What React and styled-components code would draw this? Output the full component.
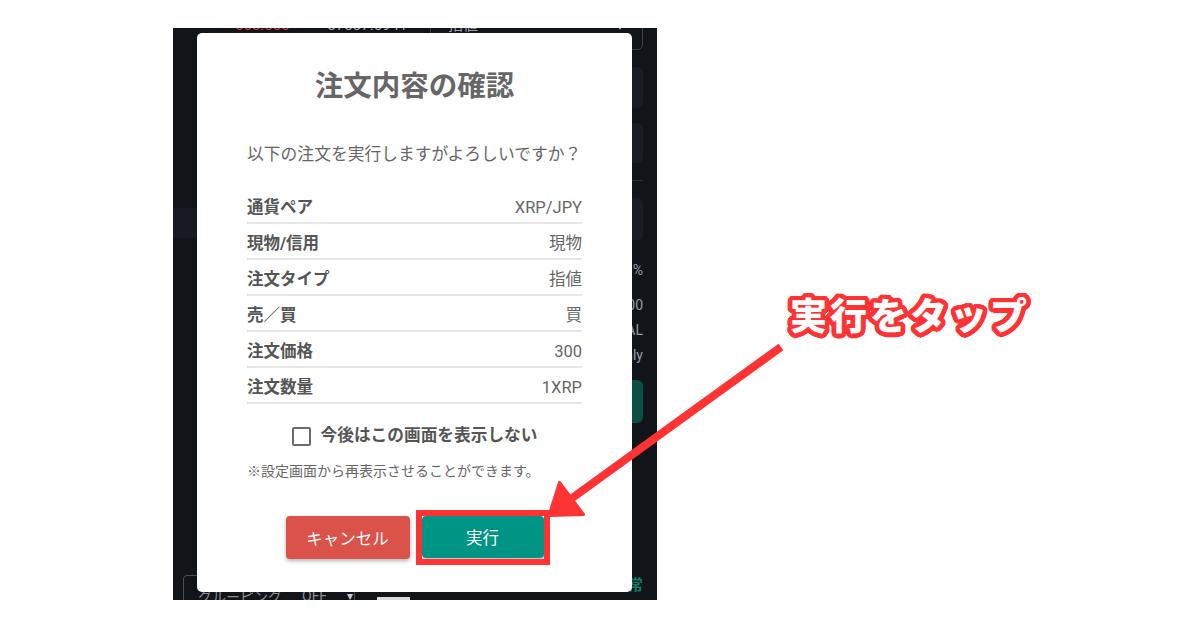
import React from "react";
import styled, { createGlobalStyle } from "styled-components";

const FONT = `Roboto, "Noto Sans CJK JP", "Noto Sans", sans-serif`;
const RED = "#ff3333";

const ring = (r, c, n = 24) =>
  Array.from({ length: n }, (_, i) => {
    const a = (i / n) * Math.PI * 2;
    return `${(Math.cos(a) * r).toFixed(2)}px ${(Math.sin(a) * r).toFixed(2)}px 0 ${c}`;
  }).join(", ");

const OUTLINE = [ring(1.5, RED, 16), ring(3, RED), ring(4.5, RED, 32)].join(", ");

const Global = createGlobalStyle`
  html, body { margin: 0; padding: 0; background: #ffffff; }
  * { box-sizing: border-box; }
`;

const Page = styled.div`
  position: relative;
  width: 1200px;
  height: 630px;
  padding: 28px 0 0 173px;
  background: #ffffff;
  font-family: ${FONT};
  overflow: hidden;
`;

/* ---------- phone screenshot ---------- */
const Phone = styled.div`
  position: relative;
  width: 484px;
  height: 572px;
  background: #111419;
  overflow: hidden;
`;

const AppContent = styled.div`
  display: grid;
  grid-template-columns: 257px 213px;
  height: 610px;
  margin-top: -22px;
`;

const LeftCol = styled.div`
  display: flex;
  flex-direction: column;
`;

const PriceRow = styled.div`
  display: flex;
  align-items: center;
  height: 38px;
  padding-left: 62px;
  gap: 38px;
  font-size: 15px;
`;

const Price = styled.span`
  color: ${(p) => p.$color};
`;

const Band = styled.div`
  margin-top: 164px;
  height: 30px;
  background: #171a21;
`;

const BottomRow = styled.div`
  margin-top: auto;
  height: 41px;
  display: flex;
  align-items: flex-start;
  padding-left: 10px;
  gap: 22px;
`;

const GroupBox = styled.div`
  display: flex;
  align-items: center;
  gap: 20px;
  height: 38px;
  width: 172px;
  padding: 4px 0 0 14px;
  border: 1px solid #4a4e57;
  border-radius: 4px;
  color: #8a8e96;
  font-size: 14px;
`;

const DepthIcon = styled.div`
  display: flex;
  flex-direction: column;
  gap: 3px;
  margin-top: 22px;
  width: 33px;
`;

const DepthBar = styled.span`
  display: block;
  height: 3px;
  width: ${(p) => p.$w}px;
  background: ${(p) => p.$c};
`;

const RightCol = styled.div`
  display: flex;
  flex-direction: column;
`;

const SelectBox = styled.div`
  display: flex;
  justify-content: space-between;
  height: 44px;
  padding: 8px 16px 0 17px;
  border: 1px solid #3c4049;
  border-radius: 5px;
  color: #a0a4ab;
  font-size: 15px;
  line-height: 20px;
`;

const Caret = styled.span`
  font-size: 12px;
  color: #c8cbd0;
`;

const DarkField = styled.div`
  margin-top: ${(p) => p.$mt}px;
  height: ${(p) => p.$h}px;
  border-radius: 6px;
  background: #1a1d24;
`;

const Rule = styled.div`
  margin-top: 17px;
  height: 1px;
  background: #2c3038;
`;

const SideText = styled.div`
  margin-top: ${(p) => p.$mt}px;
  line-height: 20px;
  text-align: right;
  color: #9a9ea6;
  font-size: 14px;
`;

const GreenButton = styled.div`
  margin-top: 15px;
  height: 43px;
  border-radius: 6px;
  background: #0b4f44;
`;

const GreenLabel = styled.div`
  margin-top: auto;
  margin-bottom: 21px;
  line-height: 20px;
  text-align: right;
  color: #0e7c68;
  font-size: 15px;
  font-weight: 700;
`;

/* ---------- modal ---------- */
const Modal = styled.div`
  position: absolute;
  left: 24px;
  top: 5px;
  width: 435px;
  background: #ffffff;
  border-radius: 5px;
  padding: 34px 50px 33px;
  display: flex;
  flex-direction: column;
`;

const Title = styled.h2`
  margin: 0;
  text-align: center;
  font-size: 28.5px;
  line-height: 40px;
  font-weight: 700;
  color: #666666;
`;

const Lead = styled.p`
  margin: 35px 0 0;
  font-size: 16.8px;
  line-height: 24px;
  color: #666666;
  white-space: nowrap;
`;

const Table = styled.div`
  margin-top: 22px;
  display: flex;
  flex-direction: column;
`;

const Row = styled.div`
  display: flex;
  justify-content: space-between;
  align-items: center;
  height: 36px;
  padding: 8px 0 2px;
  border-bottom: 2px solid #e6e6e6;
  font-size: 16.5px;
  line-height: 24px;
`;

const Label = styled.span`
  font-weight: 700;
  color: #555555;
`;

const Value = styled.span`
  color: #666666;
`;

const CheckRow = styled.label`
  margin-top: 20px;
  display: flex;
  justify-content: center;
  align-items: center;
  gap: 10px;
  line-height: 24px;
  font-size: 16.7px;
  font-weight: 700;
  color: #555555;
`;

const Box = styled.span`
  display: inline-block;
  width: 19px;
  height: 19px;
  border: 2.5px solid #6a6a6a;
  border-radius: 2px;
`;

const Note = styled.p`
  margin: 13px 0 0;
  font-size: 14px;
  line-height: 20px;
  color: #666666;
  white-space: nowrap;
`;

const Buttons = styled.div`
  margin-top: 35px;
  display: flex;
  justify-content: center;
  gap: 12px;
`;

const Button = styled.button`
  width: ${(p) => p.$w}px;
  height: ${(p) => p.$h}px;
  border: none;
  border-radius: 4px;
  background: ${(p) => p.$bg};
  color: #ffffff;
  font-family: ${FONT};
  font-size: 16.5px;
  box-shadow: 0 2px 4px rgba(0, 0, 0, 0.3);
  padding: 0;
`;

const Highlight = styled.span`
  position: relative;
  display: inline-flex;
  &::after {
    content: "";
    position: absolute;
    inset: -6px;
    border: 6px solid ${RED};
  }
`;

/* ---------- annotation ---------- */
const Callout = styled.div`
  position: absolute;
  left: 790px;
  top: 292px;
  font-family: "Noto Sans CJK JP", sans-serif;
  font-size: 37px;
  line-height: 44px;
  font-weight: 900;
  letter-spacing: 3px;
  color: #ffffff;
  text-shadow: ${OUTLINE};
  white-space: nowrap;
`;

const ArrowSvg = styled.svg`
  position: absolute;
  left: 0;
  top: 0;
  pointer-events: none;
`;

const rows = [
  ["通貨ペア", "XRP/JPY"],
  ["現物/信用", "現物"],
  ["注文タイプ", "指値"],
  ["売／買", "買"],
  ["注文価格", "300"],
  ["注文数量", "1XRP"],
];

export default function App() {
  return (
    <>
      <Global />
      <Page>
        <Phone>
          <AppContent>
            <LeftCol>
              <PriceRow>
                <Price $color="#d23c3c">000.000</Price>
                <Price $color="#a6a9b0">37337.6941</Price>
              </PriceRow>
              <Band />
              <BottomRow>
                <GroupBox>
                  <span>グルーピング</span>
                  <span>OFF</span>
                  <Caret>▾</Caret>
                </GroupBox>
                <DepthIcon>
                  <DepthBar $w={33} $c="#d9dbe0" />
                  <DepthBar $w={16} $c="#0e8a73" />
                </DepthIcon>
              </BottomRow>
            </LeftCol>
            <RightCol>
              <SelectBox>
                <span>指値</span>
                <Caret>▼</Caret>
              </SelectBox>
              <DarkField $mt={17} $h={41} />
              <DarkField $mt={15} $h={40} />
              <Rule />
              <DarkField $mt={17} $h={42} />
              <SideText $mt={20}>0.00%</SideText>
              <SideText $mt={15}>300</SideText>
              <SideText $mt={5}>TOTAL</SideText>
              <SideText $mt={5}>Post Only</SideText>
              <GreenButton />
              <GreenLabel>通常</GreenLabel>
            </RightCol>
          </AppContent>

          <Modal>
            <Title>注文内容の確認</Title>
            <Lead>以下の注文を実行しますがよろしいですか？</Lead>
            <Table>
              {rows.map(([k, v]) => (
                <Row key={k}>
                  <Label>{k}</Label>
                  <Value>{v}</Value>
                </Row>
              ))}
            </Table>
            <CheckRow>
              <Box />
              今後はこの画面を表示しない
            </CheckRow>
            <Note>※設定画面から再表示させることができます。</Note>
            <Buttons>
              <Button $w={124} $h={43} $bg="#da524a">キャンセル</Button>
              <Highlight>
                <Button $w={122} $h={42} $bg="#009484">実行</Button>
              </Highlight>
            </Buttons>
          </Modal>
        </Phone>

        <ArrowSvg width="1200" height="630" viewBox="0 0 1200 630">
          <line x1="781" y1="347" x2="568" y2="501" stroke={RED} strokeWidth="8" />
          <polygon
            points="559.5,482.5 583.5,514.5 549,515.5"
            fill={RED}
            stroke={RED}
            strokeWidth="3"
            strokeLinejoin="round"
          />
        </ArrowSvg>
        <Callout>実行をタップ</Callout>
      </Page>
    </>
  );
}
